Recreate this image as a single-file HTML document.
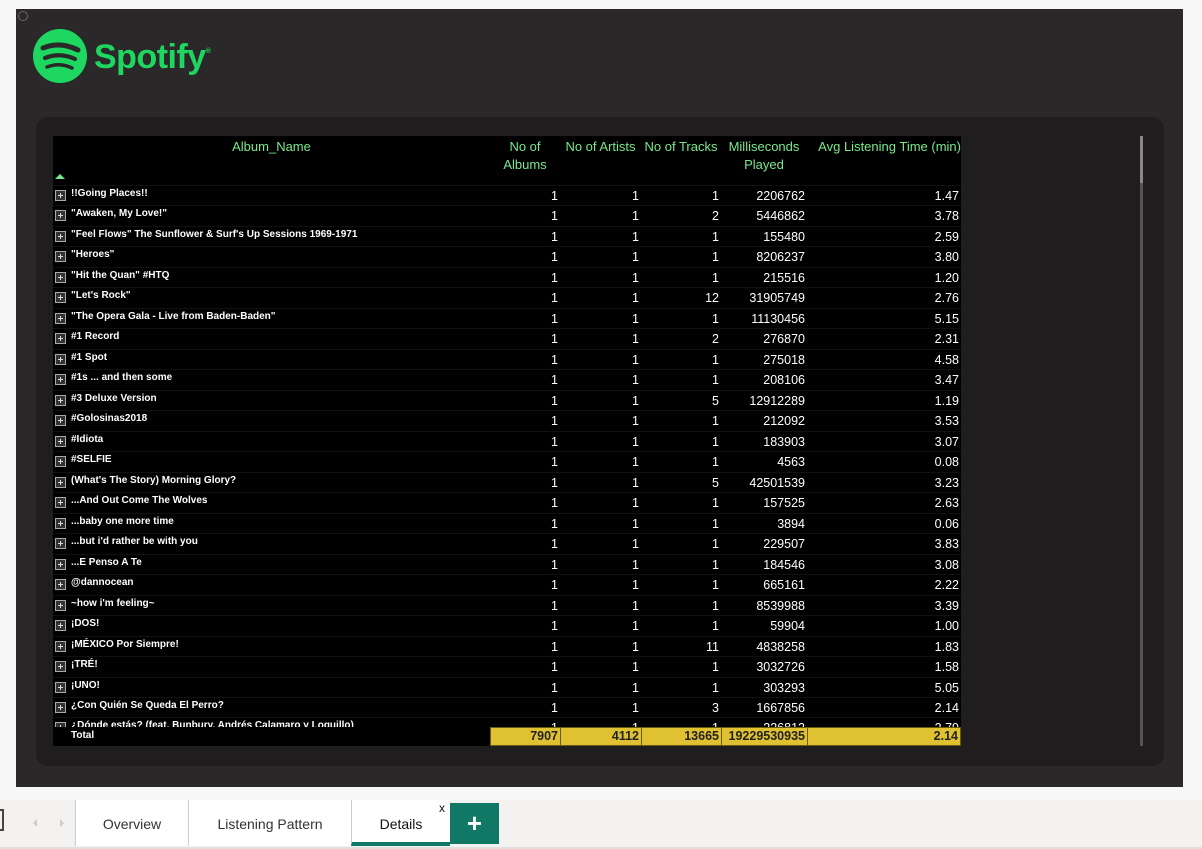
<!DOCTYPE html><html><head><style>
*{margin:0;padding:0;box-sizing:border-box}
body{width:1202px;height:849px;background:#f7f7f7;position:relative;overflow:hidden;font-family:"Liberation Sans",sans-serif}
#canvas{position:absolute;left:16px;top:9px;width:1167px;height:778px;background:#2a2829}
#card{position:absolute;left:36px;top:117px;width:1128px;height:649px;background:#1f1d1d;border-radius:12px}
#tbl{position:absolute;left:53px;top:136px;width:908px;height:610px;background:#000;overflow:hidden}
.h{position:absolute;color:#76e98a;font-size:13px;line-height:18px;text-align:center}
.row{position:absolute;left:0;width:908px;height:20.5px;border-top:1px solid #111}
.n{position:absolute;left:18px;top:2px;color:#fff;font-size:10px;font-weight:bold;white-space:nowrap}
.pl{position:absolute;left:2px;top:4px;width:11px;height:11px;border:1px solid #aaa;background:#333}
.pl:before{content:"";position:absolute;left:2px;top:4px;width:5px;height:1px;background:#ddd}
.pl:after{content:"";position:absolute;left:4px;top:2px;width:1px;height:5px;background:#ddd}
.v{position:absolute;top:3px;color:#fff;font-size:12.5px;text-align:right}
#tot{position:absolute;left:0;top:591px;width:908px;height:19px;background:#000}
.y{position:absolute;top:0;height:19px;background:#dfc131;border:1px solid #6b5a12;color:#222;font-size:12.5px;font-weight:bold;text-align:right;padding-right:2px;line-height:17px}
#tabs{position:absolute;left:0;top:800px;width:1202px;height:49px;background:#f3f2f1;border-bottom:2px solid #e0e0e0}
.t{position:absolute;top:0;height:46px;background:#fff;border-left:1px solid #ccc;font-size:14px;color:#333;text-align:center;line-height:48px}
</style></head><body>
<div id="canvas">
<div style="position:absolute;left:2px;top:2px;width:10px;height:10px;border:1px solid #666;border-radius:50%"></div>
<svg style="position:absolute;left:16px;top:19px" width="56" height="56" viewBox="0 0 56 56"><circle cx="28" cy="28" r="27" fill="#1ed760"/><path d="M11 20 Q28 13 46 22" stroke="#2a2829" stroke-width="5" fill="none" stroke-linecap="round"/><path d="M13 30 Q28 24 43 31" stroke="#2a2829" stroke-width="4.2" fill="none" stroke-linecap="round"/><path d="M15 39 Q28 34 40 40" stroke="#2a2829" stroke-width="3.5" fill="none" stroke-linecap="round"/></svg>
<div style="position:absolute;left:78px;top:29px;color:#1ed760;font-size:34px;font-weight:bold;letter-spacing:-0.5px">Spotify<span style="font-size:7px;vertical-align:top;position:relative;top:10px">®</span></div>
</div>
<div id="card"></div>
<div style="position:absolute;left:1140px;top:136px;width:3px;height:610px;background:#555"></div>
<div style="position:absolute;left:1140px;top:136px;width:3px;height:47px;background:#888"></div>
<div id="tbl">
<div class="h" style="left:0;width:437px;top:2px">Album_Name</div>
<div style="position:absolute;left:2px;top:38px;width:0;height:0;border-left:5px solid transparent;border-right:5px solid transparent;border-bottom:5px solid #76e98a"></div>
<div class="h" style="left:437px;width:70px;top:2px">No of<br>Albums</div>
<div class="h" style="left:507px;width:81px;top:2px">No of Artists</div>
<div class="h" style="left:588px;width:80px;top:2px">No of Tracks</div>
<div class="h" style="left:668px;width:86px;top:2px">Milliseconds<br>Played</div>
<div class="h" style="left:754px;width:154px;top:2px;text-align:right">Avg Listening Time (min)</div>
<div id="rows"></div>
<div id="tot"><div class="n" style="left:18px;top:3px;font-size:10px">Total</div>
<div class="y" style="left:437px;width:71px">7907</div>
<div class="y" style="left:507px;width:82px">4112</div>
<div class="y" style="left:588px;width:81px">13665</div>
<div class="y" style="left:668px;width:87px">19229530935</div>
<div class="y" style="left:754px;width:154px">2.14</div></div>
</div>
<div id="tabs">
<div style="position:absolute;left:-6px;top:9px;width:10px;height:22px;border:2px solid #444"></div>
<div style="position:absolute;left:33px;top:19px;border:4px solid transparent;border-right-color:#ccc;border-left:0"></div>
<div style="position:absolute;left:60px;top:19px;border:4px solid transparent;border-left-color:#ccc;border-right:0"></div>
<div class="t" style="left:75px;width:113px">Overview</div>
<div class="t" style="left:188px;width:163px">Listening Pattern</div>
<div class="t" style="left:351px;width:99px;color:#111;border-bottom:4px solid #117865;line-height:48px">Details<span style="position:absolute;right:5px;top:-16px;font-size:12px">x</span></div>
<div style="position:absolute;left:450px;top:3px;width:49px;height:41px;background:#117865;color:#fff;font-size:26px;font-weight:bold;text-align:center;line-height:40px">+</div>
</div>
<script>
var d=[["!!Going Places!!",1,1,1,"2206762","1.47"],['"Awaken, My Love!"',1,1,2,"5446862","3.78"],['"Feel Flows" The Sunflower &amp; Surf\'s Up Sessions 1969-1971',1,1,1,"155480","2.59"],['"Heroes"',1,1,1,"8206237","3.80"],['"Hit the Quan" #HTQ',1,1,1,"215516","1.20"],['"Let\'s Rock"',1,1,12,"31905749","2.76"],['"The Opera Gala - Live from Baden-Baden"',1,1,1,"11130456","5.15"],["#1 Record",1,1,2,"276870","2.31"],["#1 Spot",1,1,1,"275018","4.58"],["#1s ... and then some",1,1,1,"208106","3.47"],["#3 Deluxe Version",1,1,5,"12912289","1.19"],["#Golosinas2018",1,1,1,"212092","3.53"],["#Idiota",1,1,1,"183903","3.07"],["#SELFIE",1,1,1,"4563","0.08"],["(What's The Story) Morning Glory?",1,1,5,"42501539","3.23"],["...And Out Come The Wolves",1,1,1,"157525","2.63"],["...baby one more time",1,1,1,"3894","0.06"],["...but i'd rather be with you",1,1,1,"229507","3.83"],["...E Penso A Te",1,1,1,"184546","3.08"],["@dannocean",1,1,1,"665161","2.22"],["~how i'm feeling~",1,1,1,"8539988","3.39"],["¡DOS!",1,1,1,"59904","1.00"],["¡MÉXICO Por Siempre!",1,1,11,"4838258","1.83"],["¡TRÉ!",1,1,1,"3032726","1.58"],["¡UNO!",1,1,1,"303293","5.05"],["¿Con Quién Se Queda El Perro?",1,1,3,"1667856","2.14"],["¿Dónde estás? (feat. Bunbury, Andrés Calamaro y Loquillo)",1,1,1,"226812","2.79"]];
var h="";d.forEach(function(r,i){h+='<div class="row" style="top:'+(49+i*20.48)+'px"><div class="pl"></div><div class="n">'+r[0]+'</div><div class="v" style="right:403px">'+r[1]+'</div><div class="v" style="right:322px">'+r[2]+'</div><div class="v" style="right:242px">'+r[3]+'</div><div class="v" style="right:156px">'+r[4]+'</div><div class="v" style="right:2px">'+r[5]+'</div></div>';});
document.getElementById("rows").innerHTML=h;
</script>
</body></html>
